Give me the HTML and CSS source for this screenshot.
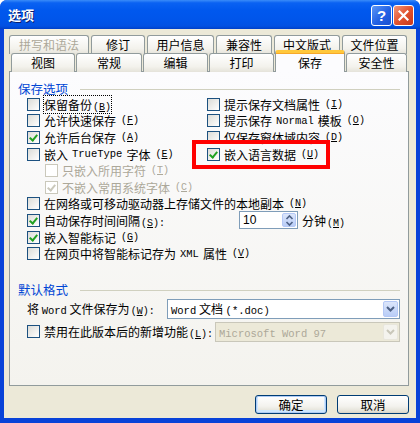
FILE: index.html
```html
<!DOCTYPE html>
<html lang="zh-CN">
  <head>
    <meta charset="UTF-8" />
    <meta name="viewport" content="width=device-width, initial-scale=1.0" />
    <link rel="stylesheet" href="styles.css">
    <title>选项</title>
  </head>
  <body>
    <div class="window">
      <div class="titlebar">
        <span class="title">选项</span>
        <span class="caption-btns">
          <span class="cap-btn help">?</span>
          <span class="cap-btn close">
            <svg width="11" height="11" viewBox="0 0 11 11"><path d="M1.5 1.5 L9.5 9.5 M9.5 1.5 L1.5 9.5" stroke="#fff" stroke-width="2.2" stroke-linecap="square" /></svg>
          </span>
        </span>
      </div>

      <div class="client">
        <!-- tab strip, two rows -->
        <div class="tabs">
          <div class="tab-row back">
            <span class="tab disabled w80">拼写和语法</span>
            <span class="tab w54">修订</span>
            <span class="tab w67">用户信息</span>
            <span class="tab w56">兼容性</span>
            <span class="tab w66">中文版式</span>
            <span class="tab w65">文件位置</span>
          </div>
          <div class="tab-row front">
            <span class="tab w64">视图</span>
            <span class="tab w66">常规</span>
            <span class="tab w65">编辑</span>
            <span class="tab w65">打印</span>
            <span class="tab w70 selected">保存</span>
            <span class="tab w61">安全性</span>
          </div>
        </div>

        <div class="panel">
          <div class="group-title"><span>保存选项</span></div>

          <div class="grid">
            <label class="row"><span class="cb"></span><span class="focus">保留备份<span class="mn">(<u>B</u>)</span></span></label>
            <label class="row"><span class="cb"></span>提示保存文档属性<span class="mn">(<u>I</u>)</span></label>
            <label class="row"><span class="cb"></span>允许快速保存<span class="mn">(<u>F</u>)</span></label>
            <label class="row"><span class="cb"></span>提示保存 <span class="en">Normal</span> 模板<span class="mn">(<u>O</u>)</span></label>
            <label class="row"><span class="cb checked"></span>允许后台保存<span class="mn">(<u>A</u>)</span></label>
            <label class="row"><span class="cb"></span>仅保存窗体域内容<span class="mn">(<u>D</u>)</span></label>
            <label class="row"><span class="cb"></span>嵌入 <span class="en">TrueType</span> 字体<span class="mn">(<u>E</u>)</span></label>
            <label class="row"><span class="marked"><span class="cb checked"></span>嵌入语言数据<span class="mn">(<u>U</u>)</span></span></label>
          </div>

          <label class="row sub disabled"><span class="cb"></span>只嵌入所用字符<span class="mn">(<u>T</u>)</span></label>
          <label class="row sub disabled"><span class="cb checked"></span>不嵌入常用系统字体<span class="mn">(<u>C</u>)</span></label>
          <label class="row"><span class="cb"></span>在网络或可移动驱动器上存储文件的本地副本<span class="mn">(<u>N</u>)</span></label>
          <div class="row">
            <span class="cb checked"></span>
            <span class="spin-label">自动保存时间间隔<span class="mn">(<u>S</u>):</span></span>
            <span class="spin">
              <span class="num">10</span>
              <span class="spin-btn">
                <svg width="9" height="13" viewBox="0 0 9 13"><path d="M1.5 5 L4.5 2 L7.5 5 M1.5 8 L4.5 11 L7.5 8" fill="none" stroke="#4d6185" stroke-width="1.6" /></svg>
              </span>
            </span>
            <span class="unit">分钟<span class="mn">(<u>M</u>)</span></span>
          </div>
          <label class="row"><span class="cb checked"></span>嵌入智能标记<span class="mn">(<u>G</u>)</span></label>
          <label class="row"><span class="cb"></span>在网页中将智能标记存为 <span class="en">XML</span> 属性<span class="mn">(<u>V</u>)</span></label>

          <div class="group-title second"><span>默认格式</span></div>

          <div class="field">
            <span class="field-label">将 <span class="en">Word</span> 文件保存为<span class="mn">(<u>W</u>):</span></span>
            <span class="combo">
              <span class="combo-text"><span class="en">Word</span> 文档 <span class="en">(*.doc)</span></span>
              <span class="combo-btn">
                <svg width="9" height="6" viewBox="0 0 9 6"><path d="M1 1 L4.5 4.5 L8 1" fill="none" stroke="#4d6185" stroke-width="2" /></svg>
              </span>
            </span>
          </div>
          <div class="field second">
            <span class="cb"></span>
            <span class="field-label2">禁用在此版本后的新增功能<span class="mn">(<u>L</u>):</span></span>
            <span class="combo disabled">
              <span class="combo-text"><span class="en">Microsoft Word 97</span></span>
              <span class="combo-btn">
                <svg width="9" height="6" viewBox="0 0 9 6"><path d="M1 1 L4.5 4.5 L8 1" fill="none" stroke="#c9c7ba" stroke-width="2" /></svg>
              </span>
            </span>
          </div>
        </div>

        <div class="buttons">
          <button class="default">确定</button>
          <button>取消</button>
        </div>
      </div>
    </div>
  </body>
</html>
```

FILE: styles.css
```css
/* Window frame */

body {
  margin: 0;
  background: #fff;
  font-family: "Noto Sans CJK SC", sans-serif;
  font-size: 12px;
  color: #000;
}
.window {
  width: 420px;
  height: 423px;
  display: flex;
  flex-direction: column;
  background: #0842d8;
  border-radius: 7px 7px 0 0;
  overflow: hidden;
}
.titlebar {
  height: 29px;
  flex: none;
  display: flex;
  align-items: center;
  justify-content: space-between;
  padding: 0 6px 0 8px;
  background: linear-gradient(#3a8cf9 0, #0a62f2 10%, #0058ee 35%, #0055ea 70%, #0251e2 90%, #0040c8 100%);
}
.title {
  color: #fff;
  font-weight: 700;
  font-size: 13px;
  text-shadow: 1px 1px 0 #0a1e6e;
}
.caption-btns {
  display: flex;
  gap: 1px;
  margin-top: 1px;
}
.cap-btn {
  width: 21px;
  height: 21px;
  box-sizing: border-box;
  border: 1px solid #fff;
  border-radius: 3px;
  display: flex;
  align-items: center;
  justify-content: center;
}
.help {
  background: linear-gradient(135deg, #5d97f6, #2261e4 55%, #1a4fd0);
  color: #fff;
  font: 700 15px "Liberation Sans", sans-serif;
}
.close {
  background: linear-gradient(135deg, #f0977b, #e2532f 50%, #c8381a);
}

.client {
  flex: 1;
  margin: 0 4px 5px;
  background: #ece9d8;
  padding-top: 6px;
  display: flex;
  flex-direction: column;
}

/* Tabs */
.tabs {
  position: relative;
  z-index: 1;
}
.tab-row {
  display: flex;
  height: 18px;
}
.tab-row.back {
  gap: 2px;
  padding-left: 5px;
}
.tab-row.front {
  gap: 1px;
  padding-left: 7px;
}
.tab {
  box-sizing: border-box;
  height: 19px;
  border: 1px solid #919b9c;
  border-bottom: 0;
  border-radius: 3px 3px 0 0;
  background: linear-gradient(#fff, #f3f2ec 70%, #e5e3da);
  text-align: center;
  line-height: 17px;
  font-size: 12px;
}
.tab.disabled {
  color: #aca899;
}
.tab.selected {
  height: 22px;
  margin-top: -3px;
  border-top: 3px solid #ffc83c;
  box-shadow: inset 0 1px 0 #f7a82a;
  background: #fcfcfe;
  line-height: 19px;
}
.w54 { width: 54px; }
.w56 { width: 56px; }
.w61 { width: 61px; }
.w64 { width: 64px; }
.w65 { width: 65px; }
.w66 { width: 66px; }
.w67 { width: 67px; }
.w70 { width: 70px; }
.w80 { width: 80px; }

/* Panel */
.panel {
  box-sizing: border-box;
  margin-left: 5px;
  width: 400px;
  height: 315px;
  border: 1px solid #919b9c;
  background: linear-gradient(#fcfcfe, #f4f3ee);
  padding: 8px 8px 0;
}
.group-title {
  display: flex;
  align-items: center;
  gap: 12px;
  height: 16px;
  color: #0046d5;
  font-size: 12.5px;
}
.group-title::after {
  content: "";
  flex: 1;
  border-top: 1px solid #d0d0bf;
  margin-top: 2px;
}
.group-title.second {
  margin-top: 20px;
}
.grid {
  display: grid;
  grid-template-columns: 189px 1fr;
}
.row {
  display: flex;
  align-items: center;
  gap: 4px;
  height: 16.6px;
  padding-left: 9px;
  white-space: nowrap;
}
.row.sub {
  padding-left: 27px;
}
.grid .row:nth-child(even) {
  padding-left: 0;
}
.disabled {
  color: #aca899;
}
.en {
  font-family: "Liberation Mono", monospace;
  font-size: 10.5px;
}
.mn {
  font-family: "Liberation Mono", monospace;
  font-size: 10px;
  margin-left: 1px;
}
u {
  text-underline-offset: 1px;
}
.focus {
  outline: 1px dotted #000;
  outline-offset: 0;
}

/* Checkboxes */
.cb {
  flex: none;
  width: 13px;
  height: 13px;
  box-sizing: border-box;
  border: 1px solid #1c5180;
  background: linear-gradient(135deg, #dcdcd7, #fff);
  position: relative;
}
.cb.checked::after {
  content: "";
  position: absolute;
  left: 3px;
  top: 1px;
  width: 3px;
  height: 6px;
  border: solid #21a121;
  border-width: 0 2px 2px 0;
  transform: rotate(40deg);
}
.disabled .cb {
  border-color: #cac8bb;
  background: #fff;
}
.disabled .cb.checked::after {
  border-color: #cac8bb;
}

/* Red annotation frame */
.marked {
  display: flex;
  align-items: center;
  gap: 4px;
  position: relative;
}
.marked::after {
  content: "";
  position: absolute;
  left: -15px;
  right: -11px;
  top: -6px;
  bottom: -6px;
  border: 4px solid #f00;
}

/* Spin box */
.spin-label {
  width: 191px;
}
.spin {
  box-sizing: border-box;
  width: 59px;
  height: 18px;
  border: 1px solid #7f9db9;
  background: #fff;
  display: flex;
  align-items: center;
  justify-content: space-between;
  padding: 0 1px 0 3px;
}
.num {
  font-family: "Liberation Sans", sans-serif;
  font-size: 12px;
}
.spin-btn {
  width: 14px;
  height: 14px;
  border-radius: 2px;
  background: linear-gradient(#dce6fb, #b9cdf7);
  border: 1px solid #b4c8f6;
  box-sizing: border-box;
  display: flex;
  align-items: center;
  justify-content: center;
}

/* Combo boxes */
.field {
  display: flex;
  align-items: center;
  height: 20px;
  margin-top: 1px;
  padding-left: 9px;
  white-space: nowrap;
}
.field.second {
  margin-top: 3px;
  gap: 4px;
}
.field-label {
  flex: none;
  width: 140px;
}
.field-label2 {
  flex: none;
  width: 167px;
}
.combo {
  box-sizing: border-box;
  width: 236px;
  height: 20px;
  border: 1px solid #7f9db9;
  background: #fff;
  display: flex;
  align-items: center;
  justify-content: space-between;
  padding: 0 1px 0 3px;
}
.field.second .combo {
  width: 188px;
}
.combo-btn {
  box-sizing: border-box;
  width: 15px;
  height: 16px;
  border: 1px solid #b4c8f6;
  border-radius: 2px;
  background: linear-gradient(#dce6fb, #b9cdf7);
  display: flex;
  align-items: center;
  justify-content: center;
}
.combo.disabled {
  background: #ece9d8;
  border-color: #c9c7ba;
  color: #aca899;
}
.combo.disabled .combo-btn {
  background: #f4f3ee;
  border-color: #e8e6dc;
}

/* Buttons */
.buttons {
  display: flex;
  justify-content: flex-end;
  gap: 10px;
  padding: 9px 7px 0 0;
}
button {
  width: 72px;
  height: 19px;
  padding: 0;
  border: 1px solid #003c74;
  border-radius: 3px;
  background: linear-gradient(#fff, #f3f2ee 60%, #e3e1d7 90%, #d6d0c5);
  font-family: "Noto Sans CJK SC", sans-serif;
  font-size: 12.5px;
  line-height: 16px;
  color: #000;
}
button.default {
  box-shadow: inset 0 0 0 1px #aecbf5, inset 0 -1px 0 2px #cee7ff;
}
```
